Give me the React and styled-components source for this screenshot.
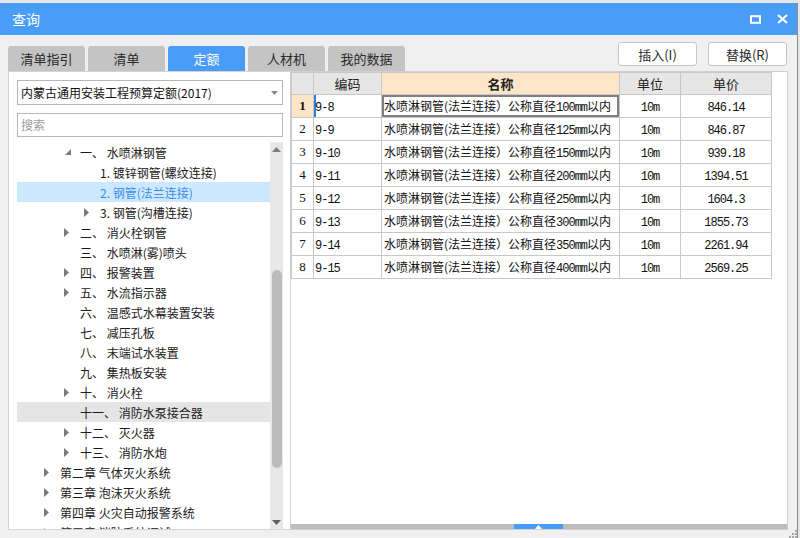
import React from 'react';
import styled, { createGlobalStyle } from 'styled-components';

const GlobalStyle = createGlobalStyle`
  html, body { margin: 0; padding: 0; }
  body {
    background: #e6e6e6;
    font-family: "Noto Sans CJK SC", "Noto Sans", sans-serif;
    color: #1a1a1a;
  }
`;

const tabs = ['清单指引', '清单', '定额', '人材机', '我的数据'];

const tree = [
  { lv: 2, exp: 'open', text: '一、 水喷淋钢管' },
  { lv: 3, text: '1. 镀锌钢管(螺纹连接)' },
  { lv: 3, text: '2. 钢管(法兰连接)', state: 'sel' },
  { lv: 3, exp: 'closed', text: '3. 钢管(沟槽连接)' },
  { lv: 2, exp: 'closed', text: '二、 消火栓钢管' },
  { lv: 2, text: '三、 水喷淋(雾)喷头' },
  { lv: 2, exp: 'closed', text: '四、 报警装置' },
  { lv: 2, exp: 'closed', text: '五、 水流指示器' },
  { lv: 2, text: '六、 温感式水幕装置安装' },
  { lv: 2, text: '七、 减压孔板' },
  { lv: 2, text: '八、 末端试水装置' },
  { lv: 2, text: '九、 集热板安装' },
  { lv: 2, exp: 'closed', text: '十、 消火栓' },
  { lv: 2, text: '十一、 消防水泵接合器', state: 'hover' },
  { lv: 2, exp: 'closed', text: '十二、 灭火器' },
  { lv: 2, exp: 'closed', text: '十三、 消防水炮' },
  { lv: 1, exp: 'closed', text: '第二章 气体灭火系统' },
  { lv: 1, exp: 'closed', text: '第三章 泡沫灭火系统' },
  { lv: 1, exp: 'closed', text: '第四章 火灾自动报警系统' },
  { lv: 1, exp: 'closed', text: '第五章 消防系统调试' },
];

const rows = [
  ['9-8', '100', '846.14'],
  ['9-9', '125', '846.87'],
  ['9-10', '150', '939.18'],
  ['9-11', '200', '1394.51'],
  ['9-12', '250', '1604.3'],
  ['9-13', '300', '1855.73'],
  ['9-14', '350', '2261.94'],
  ['9-15', '400', '2569.25'],
];

const Arrow = ({ exp }) => {
  if (exp === 'open') {
    return (
      <svg width="6" height="6" viewBox="0 0 6 6">
        <polygon points="6,0 6,6 0,6" fill="#7a7a7a" />
      </svg>
    );
  }
  if (exp === 'closed') {
    return (
      <svg width="5" height="9" viewBox="0 0 5 9">
        <polygon points="0,0 5,4.5 0,9" fill="#7a7a7a" />
      </svg>
    );
  }
  return null;
};

const App = () => {
  return (
    <Window>
      <GlobalStyle />
      <TitleBar>
        <span>查询</span>
        <TitleIcons>
          <svg width="11" height="9" viewBox="0 0 11 9">
            <rect x="1" y="1.2" width="9" height="6.6" fill="none" stroke="#fff" strokeWidth="2" />
          </svg>
          <svg width="11" height="10" viewBox="0 0 11 10">
            <path d="M1 1 L10 9 M10 1 L1 9" stroke="#fff" strokeWidth="2.2" />
          </svg>
        </TitleIcons>
      </TitleBar>

      <Body>
        <TopRow>
          <Tabs>
            {tabs.map((t) => (
              <Tab key={t} $active={t === '定额'}>{t}</Tab>
            ))}
          </Tabs>
          <Buttons>
            <Button>插入(I)</Button>
            <Button>替换(R)</Button>
          </Buttons>
        </TopRow>

        <Main>
          <LeftPane>
            <Select>
              <span>内蒙古通用安装工程预算定额(2017)</span>
              <svg width="7" height="4" viewBox="0 0 7 4">
                <polygon points="0,0 7,0 3.5,4" fill="#8a8a8a" />
              </svg>
            </Select>
            <Search>搜索</Search>
            <TreeWrap>
              <TreeList>
                {tree.map((n, i) => (
                  <TreeRow key={i} $lv={n.lv} $state={n.state}>
                    <Toggle $exp={n.exp}>
                      <Arrow exp={n.exp} />
                    </Toggle>
                    <span>{n.text}</span>
                  </TreeRow>
                ))}
              </TreeList>
              <VScroll>
                <ScrollArrow>
                  <svg width="9" height="5" viewBox="0 0 9 5">
                    <polygon points="0,5 9,5 4.5,0" fill="#7d7d7d" />
                  </svg>
                </ScrollArrow>
                <Track>
                  <Thumb style={{ marginTop: 114, height: 198 }} />
                </Track>
                <ScrollArrow>
                  <svg width="9" height="5" viewBox="0 0 9 5">
                    <polygon points="0,0 9,0 4.5,5" fill="#5f5f6a" />
                  </svg>
                </ScrollArrow>
              </VScroll>
            </TreeWrap>
          </LeftPane>

          <RightPane>
            <TableArea>
              <Grid>
                <colgroup>
                  <col style={{ width: 22 }} />
                  <col style={{ width: 68 }} />
                  <col style={{ width: 238 }} />
                  <col style={{ width: 61 }} />
                  <col style={{ width: 91 }} />
                </colgroup>
                <thead>
                  <tr>
                    <Th />
                    <Th>编码</Th>
                    <Th $name>名称</Th>
                    <Th>单位</Th>
                    <Th>单价</Th>
                  </tr>
                </thead>
                <tbody>
                  {rows.map((r, i) => (
                    <tr key={r[0]}>
                      <NumCell $current={i === 0}>{i + 1}</NumCell>
                      <CodeCell $current={i === 0}><Latin>{r[0]}</Latin></CodeCell>
                      <NameCell $focus={i === 0}>
                        水喷淋钢管(法兰连接）公称直径<Latin>{r[1]}mm</Latin>以内
                      </NameCell>
                      <CenterCell><Latin>10m</Latin></CenterCell>
                      <CenterCell><Latin>{r[2]}</Latin></CenterCell>
                    </tr>
                  ))}
                </tbody>
              </Grid>
            </TableArea>
            <HScroll>
              <HThumb style={{ marginLeft: 223 }}>
                <svg width="7" height="4" viewBox="0 0 7 4">
                  <polygon points="0,4 7,4 3.5,0" fill="#fff" />
                </svg>
              </HThumb>
            </HScroll>
          </RightPane>
        </Main>

        <Footer>
          <svg width="8" height="8" viewBox="0 0 8 8">
            <rect x="6" y="0" width="2" height="2" fill="#a8a8a8" />
            <rect x="3" y="3" width="2" height="2" fill="#a8a8a8" />
            <rect x="6" y="3" width="2" height="2" fill="#a8a8a8" />
            <rect x="0" y="6" width="2" height="2" fill="#a8a8a8" />
            <rect x="3" y="6" width="2" height="2" fill="#a8a8a8" />
            <rect x="6" y="6" width="2" height="2" fill="#a8a8a8" />
          </svg>
        </Footer>
      </Body>
    </Window>
  );
};

export default App;

const Window = styled.div`
  width: 797px;
  height: 535px;
  margin-top: 3px;
  background: #f0f0f0;
  border-right: 1px solid #8c8c8c;
  display: flex;
  flex-direction: column;
`;

const TitleBar = styled.div`
  height: 32px;
  flex-shrink: 0;
  background: #4a9cf9;
  color: #fff;
  font-size: 14px;
  padding: 0 9px 0 12px;
  display: flex;
  align-items: center;
  justify-content: space-between;
`;

const TitleIcons = styled.div`
  display: flex;
  align-items: center;
  gap: 16px;
`;

const Body = styled.div`
  flex: 1;
  display: flex;
  flex-direction: column;
  padding: 7px 9px 0 8px;
`;

const TopRow = styled.div`
  height: 29px;
  display: flex;
  justify-content: space-between;
`;

const Tabs = styled.div`
  display: flex;
  gap: 3px;
  align-self: flex-end;
`;

const Tab = styled.div`
  width: 77px;
  height: 25px;
  border-radius: 3px 3px 0 0;
  background: ${(p) => (p.$active ? '#4a9cf9' : '#c4c4c4')};
  color: ${(p) => (p.$active ? '#fff' : '#2a2a2a')};
  font-size: 13px;
  display: flex;
  align-items: center;
  justify-content: center;
`;

const Buttons = styled.div`
  display: flex;
  gap: 11px;
  margin-right: 1px;
  align-self: flex-start;
`;

const Button = styled.div`
  width: 77px;
  height: 22px;
  background: #fff;
  border: 1px solid #c6c6c6;
  border-radius: 3px;
  font-size: 13px;
  color: #2a2a2a;
  display: flex;
  align-items: center;
  justify-content: center;
`;

const Main = styled.div`
  height: 459px;
  display: flex;
`;

const LeftPane = styled.div`
  width: 282px;
  box-sizing: border-box;
  background: #fff;
  border: 1px solid #d4d4d4;
  border-right: none;
  padding: 8px 7px 0 8px;
  display: flex;
  flex-direction: column;
`;

const Select = styled.div`
  height: 23px;
  border: 1px solid #b8b8b8;
  padding: 0 4px 0 3px;
  font-size: 12px;
  line-height: 23px;
  color: #111;
  display: flex;
  align-items: center;
  justify-content: space-between;
`;

const Search = styled.div`
  margin-top: 8px;
  height: 22px;
  border: 1px solid #b8b8b8;
  padding: 0 3px;
  font-size: 12px;
  line-height: 22px;
  color: #9c9c9c;
`;

const TreeWrap = styled.div`
  margin-top: 5px;
  flex: 1;
  display: flex;
  overflow: hidden;
`;

const TreeList = styled.div`
  flex: 1;
  overflow: hidden;
`;

const TreeRow = styled.div`
  height: 20px;
  display: flex;
  align-items: center;
  padding-left: ${(p) => 3 + p.$lv * 20}px;
  font-size: 12px;
  white-space: nowrap;
  background: ${(p) =>
    p.$state === 'sel' ? '#cce8ff' : p.$state === 'hover' ? '#e5e5e5' : 'transparent'};
  color: ${(p) => (p.$state === 'sel' ? '#3d8de4' : '#1a1a1a')};
`;

const Toggle = styled.div`
  width: 20px;
  flex-shrink: 0;
  display: flex;
  align-items: center;
  padding-left: ${(p) => (p.$exp === 'open' ? 5 : 4)}px;
  box-sizing: border-box;
`;

const VScroll = styled.div`
  width: 13px;
  background: #e8e8e8;
  display: flex;
  flex-direction: column;
`;

const ScrollArrow = styled.div`
  height: 14px;
  display: flex;
  align-items: center;
  justify-content: center;
`;

const Track = styled.div`
  flex: 1;
  display: flex;
  flex-direction: column;
  align-items: center;
`;

const Thumb = styled.div`
  width: 10px;
  border-radius: 5px;
  background: #bcbcbc;
`;

const RightPane = styled.div`
  flex: 1;
  background: #fff;
  border: 1px solid #d0d0d0;
  display: flex;
  flex-direction: column;
`;

const TableArea = styled.div`
  flex: 1;
  overflow: hidden;
`;

const Grid = styled.table`
  border-collapse: collapse;
  table-layout: fixed;
  width: 481px;
  font-size: 12px;
  tr { height: 23px; }
  thead tr { height: 22px; }
`;

const Th = styled.th`
  border: 1px solid #c8c8c8;
  background: ${(p) => (p.$name ? '#fde6c8' : '#e6e6e6')};
  font-size: 13px;
  font-weight: ${(p) => (p.$name ? 700 : 400)};
  color: #222;
  padding: 0;
  line-height: 20px;
`;

const Cell = styled.td`
  border: 1px solid #c8c8c8;
  padding: 0 1px;
  height: 22px;
  box-sizing: border-box;
  font-size: 12px;
  line-height: 20px;
  white-space: nowrap;
  overflow: hidden;
  color: #111;
`;

const Latin = styled.span`
  font-family: "Liberation Mono", monospace;
  letter-spacing: -1px;
  line-height: 12px;
`;

const NumCell = styled(Cell)`
  text-align: center;
  padding: 0;
  background: ${(p) => (p.$current ? '#fde6c8' : '#fff')};
  font-weight: ${(p) => (p.$current ? 700 : 400)};
  font-family: "Liberation Serif", serif;
  font-size: 13px;
`;

const CodeCell = styled(Cell)`
  box-shadow: ${(p) => (p.$current ? 'inset 2px 0 0 #2f7de1' : 'none')};
`;

const NameCell = styled(Cell)`
  padding: 0 1px 0 2px;
  box-shadow: ${(p) => (p.$focus ? 'inset 0 0 0 2px #7f7f7f' : 'none')};
`;

const CenterCell = styled(Cell)`
  text-align: center;
`;

const HScroll = styled.div`
  height: 5px;
  background: #bcbcbc;
  display: flex;
`;

const HThumb = styled.div`
  width: 49px;
  height: 5px;
  background: #4a9cf9;
  display: flex;
  align-items: flex-end;
  justify-content: center;
  svg { display: block; }
`;

const Footer = styled.div`
  flex: 1;
  display: flex;
  justify-content: flex-end;
  align-items: flex-end;
  margin-right: -9px;
`;
